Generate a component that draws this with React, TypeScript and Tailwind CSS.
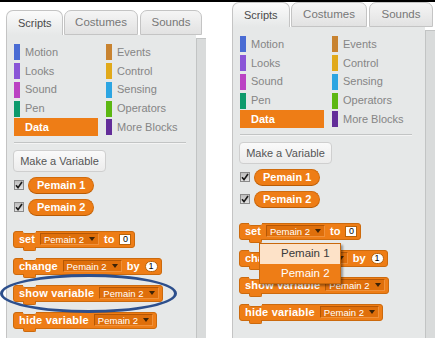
import React from "react";

function Check() {
  return (
    <span className="w-[10px] h-[10px] border border-[#8a8a8a] bg-linear-to-b from-[#bdbdbd] to-[#e2e2e2] flex items-center justify-center">
      <svg width="8" height="8" viewBox="0 0 8 8">
        <path d="M1 4.2 L3 6.6 L7 1" fill="none" stroke="#1a1a1a" strokeWidth="1.6" />
      </svg>
    </span>
  );
}

function Tri() {
  return (
    <svg width="6" height="4" viewBox="0 0 6 4" className="shrink-0">
      <polygon points="0,0 6,0 3,4" fill="#3d2308" />
    </svg>
  );
}

function Field({ label }: { label: string }) {
  return (
    <span className="inline-flex items-center h-[12px] pl-[3px] pr-[3px] gap-[5px] bg-[#df6f0b] border border-t-[#b55705] border-l-[#b55705] border-r-[#f0913a] border-b-[#f0913a] text-[9.5px] font-normal text-white leading-none">
      {label}
      <Tri />
    </span>
  );
}

function Block({ children, menu }: { children: React.ReactNode; menu?: boolean }) {
  return (
    <div className="relative self-start inline-flex items-center h-[17px] pl-[5px] pr-[3px] gap-[5px] rounded-[3px] bg-[#ee7d16] border border-[#cc6a0d] text-white font-bold text-[11px] leading-none">
      <span className="absolute left-[9px] top-[-1px] w-[13px] h-[3px] bg-[#e6e8e8] border-b border-[#cc6a0d] rounded-b-[2px]" />
      <span className="absolute left-[9px] bottom-[-4px] w-[13px] h-[4px] bg-[#ee7d16] border-b border-x border-[#cc6a0d] rounded-b-[2px]" />
      {children}
      {menu && (
        <div className="absolute left-[19px] top-[19px] z-20 w-[82px] flex flex-col bg-[#ee7d16] border border-[#c9680c] shadow-[2px_2px_2px_rgba(0,0,0,0.35)] font-normal text-[11.5px]">
          <div className="h-[20px] flex items-center pl-[21px] bg-[#fde2c8] text-[#3a3a3a]">Pemain 1</div>
          <div className="h-[19px] flex items-center pl-[21px] text-white">Pemain 2</div>
        </div>
      )}
    </div>
  );
}

function Pill({ label }: { label: string }) {
  return (
    <span className="inline-flex items-center h-[17px] px-[8px] rounded-full bg-[#ee7d16] border border-[#d06b0c] border-b-[#b85c06] text-white font-bold text-[11px] leading-none">
      {label}
    </span>
  );
}

function Cat({ label, bar }: { label: string; bar: string }) {
  return (
    <div className="flex items-center h-[18.75px] gap-[5px]">
      <span className={"w-[6px] h-[16px] " + bar} />
      <span className="text-[11px] text-[#858585] leading-none">{label}</span>
    </div>
  );
}

function Panel({ menu, pal, tabs }: { menu?: boolean; pal: string; tabs: [string, string, string] }) {
  return (
    <div className="flex flex-col h-full">
      <div className="flex items-end h-[25px] shrink-0">
        <div className={"h-[25px] rounded-t-[7px] border border-b-0 border-[#c4c4c4] bg-linear-to-b from-[#fbfbfb] to-[#e6e8e8] flex items-center pl-[11px] text-[11px] text-[#4a4a4a] " + tabs[0]}>
          Scripts
        </div>
        <div className={"ml-[1px] h-[25px] rounded-t-[7px] border border-[#c4c4c4] bg-linear-to-b from-[#f5f5f5] to-[#e2e2e2] flex items-center justify-center text-[11.5px] text-[#777] " + tabs[1]}>
          Costumes
        </div>
        <div className={"ml-[2px] h-[25px] rounded-t-[7px] border border-[#c4c4c4] bg-linear-to-b from-[#f5f5f5] to-[#e2e2e2] flex items-center justify-center text-[11.5px] text-[#777] " + tabs[2]}>
          Sounds
        </div>
      </div>
      <div className="flex flex-1">
        <div className={"bg-[#e6e8e8] border-l border-[#c4c4c4] flex flex-col " + pal}>
          <div className="grid grid-cols-[84px_84px] gap-x-[8px] pl-[7px] pt-[8px]">
            <div className="flex flex-col">
              <Cat label="Motion" bar="bg-[#4a6cd4]" />
              <Cat label="Looks" bar="bg-[#8a55d7]" />
              <Cat label="Sound" bar="bg-[#bb42c3]" />
              <Cat label="Pen" bar="bg-[#0e9a6c]" />
              <div className="h-[18.75px] flex items-center">
                <div className="h-[18px] w-[84px] bg-[#ee7d16] flex items-center pl-[11px] text-white font-bold text-[11px] leading-none">
                  Data
                </div>
              </div>
            </div>
            <div className="flex flex-col">
              <Cat label="Events" bar="bg-[#c88330]" />
              <Cat label="Control" bar="bg-[#e1a91a]" />
              <Cat label="Sensing" bar="bg-[#2ca5e2]" />
              <Cat label="Operators" bar="bg-[#5cb712]" />
              <Cat label="More Blocks" bar="bg-[#632d99]" />
            </div>
          </div>
          <div className="ml-[7px] mt-[5px] w-[172px] border-t border-[#c2c4c4] border-b border-b-[#f4f4f4]" />
          <div className="ml-[6px] mt-[6px] self-start h-[22px] w-[93px] rounded-[4px] border border-[#cfcfcf] bg-linear-to-b from-[#fafafa] to-[#ececec] flex items-center justify-center text-[11px] text-[#555]">
            Make a Variable
          </div>
          <div className="ml-[7px] mt-[5px] flex flex-col gap-[5px]">
            <div className="flex items-center gap-[4px]">
              <Check />
              <Pill label="Pemain 1" />
            </div>
            <div className="flex items-center gap-[4px]">
              <Check />
              <Pill label="Pemain 2" />
            </div>
          </div>
          <div className="ml-[6px] mt-[15px] flex flex-col gap-[10px]">
            <Block menu={menu}>
              <span>set</span>
              <Field label="Pemain 2" />
              <span>to</span>
              <span className="w-[12px] h-[11px] bg-white border border-[#b86208] text-black text-[9px] font-normal flex items-center justify-center">0</span>
            </Block>
            <Block>
              <span>change</span>
              <Field label="Pemain 2" />
              <span>by</span>
              <span className="w-[13px] h-[11px] rounded-full bg-white border border-[#b86208] text-black text-[9px] font-normal flex items-center justify-center">1</span>
            </Block>
            <Block>
              <span className="tracking-[0.2px]">show variable</span>
              <Field label="Pemain 2" />
            </Block>
            <Block>
              <span className="tracking-[0.2px]">hide variable</span>
              <Field label="Pemain 2" />
            </Block>
          </div>
        </div>
        <div className="flex-1 mt-[3px] bg-[#d9dbdb] border-l border-t border-[#c2c4c4]" />
      </div>
    </div>
  );
}

export default function App() {
  return (
    <div className="relative w-[435px] h-[338px] overflow-hidden bg-white font-['Liberation_Sans',Arial,sans-serif]">
      <div className="h-[2px] bg-black" />
      <div className="flex h-[336px]">
        <div className="ml-[6px] mt-[8px] w-[200px] h-[328px]">
          <Panel pal="w-[190px]" tabs={["w-[57px]", "w-[74px]", "w-[62px]"]} />
        </div>
        <div className="ml-[26px] w-[203px] h-[336px]">
          <Panel menu pal="w-[193px]" tabs={["w-[58px]", "w-[76px]", "w-[64px]"]} />
        </div>
      </div>
      <div className="absolute left-[0px] top-[274px] w-[177px] h-[39px] rounded-[50%] border-[3.5px] border-[#2d4f8c] z-30" />
    </div>
  );
}
